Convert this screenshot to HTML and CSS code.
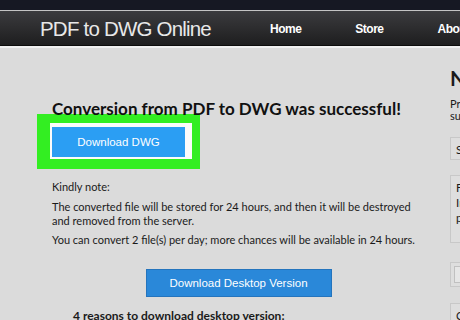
FILE: index.html
```html
<!DOCTYPE html>
<html lang="en">

<head>
    <meta charset="UTF-8">
    <meta name="viewport" content="width=device-width, initial-scale=1.0">
    <title>PDF to DWG Online - Conversion complete</title>
    <link rel="stylesheet" href="styles.css">
</head>

<body>
    <div class="top-strip"></div>

    <header class="header">
        <div class="logo">PDF to DWG Online</div>
        <nav class="nav">
            <a href="#">Home</a>
            <a href="#">Store</a>
            <a href="#">About</a>
        </nav>
    </header>

    <div class="page">
        <main class="content">
            <h1>Conversion from PDF to DWG was successful!</h1>

            <!-- highlighted download button -->
            <div class="highlight">
                <div class="btn-frame">
                    <a href="#" class="btn btn-main">Download DWG</a>
                </div>
            </div>

            <p class="note-title">Kindly note:</p>
            <p>The converted file will be stored for 24 hours, and then it will be destroyed and removed from the server.</p>
            <p>You can convert 2 file(s) per day; more chances will be available in 24 hours.</p>

            <div class="desktop">
                <a href="#" class="btn btn-desktop">Download Desktop Version</a>
            </div>

            <h2>4 reasons to download desktop version:</h2>
        </main>

        <aside class="sidebar">
            <h3>News</h3>
            <p>Professional PDF to DWG converter, supports batch conversion</p>
            <div class="side-box short">Sign up</div>
            <div class="side-box tall">Free<br>Import<br>pdf</div>
            <div class="side-box mid"><span class="field"></span></div>
            <div class="side-box">Contact</div>
        </aside>
    </div>
</body>

</html>
```

FILE: styles.css
```css
* {
    margin: 0;
    padding: 0;
    box-sizing: border-box;
}

body {
    background-color: #dbdbdb;
    font-family: Lato, 'Open Sans', sans-serif;
    color: #1a1a1a;
    width: 460px;
    height: 320px;
    overflow: hidden;
}

.top-strip {
    height: 10px;
    background-color: #161823;
}

.header {
    height: 38px;
    display: flex;
    align-items: center;
    border-top: 1px solid #c4c4c4;
    border-bottom: 2px solid #f0f0f0;
    background: linear-gradient(#3b3b3e, #1d1d1e);
    box-shadow: inset 0 -1px 0 #0c0c0c;
    padding-left: 40px;
    white-space: nowrap;
    overflow: hidden;
}

.logo {
    flex-shrink: 0;
    width: 230px;
    font-family: 'Liberation Sans', Arial, sans-serif;
    font-size: 20.5px;
    letter-spacing: -0.8px;
    color: #e8e8e8;
}

.nav {
    display: flex;
    gap: 54px;
}

.nav a {
    color: #fff;
    text-decoration: none;
    font-family: 'Liberation Sans', Arial, sans-serif;
    font-size: 12px;
    font-weight: bold;
    letter-spacing: -0.5px;
}

.page {
    display: flex;
    padding-left: 52px;
}

.content {
    width: 373px;
    flex-shrink: 0;
    padding-top: 50px;
}

h1 {
    font-size: 17px;
    font-weight: bold;
    line-height: 21px;
    color: #111;
    white-space: nowrap;
    margin-bottom: -5px;
}

.highlight {
    width: 163px;
    height: 55px;
    margin-left: -15px;
    background-color: #33ee22;
    padding: 9px 8px 9px 13px;
}

.btn-frame {
    background-color: #fbfbfb;
    padding: 4px 7px 2px 2px;
    height: 36px;
}

.btn {
    display: block;
    color: #fff;
    text-decoration: none;
    font-family: 'Liberation Sans', Arial, sans-serif;
    text-align: center;
}

.btn-main {
    height: 30px;
    line-height: 30px;
    background-color: #2b9ef3;
    font-size: 11.5px;
}

p {
    font-size: 11px;
    line-height: 14px;
    margin-bottom: 5px;
}

.note-title {
    margin-top: 11px;
    margin-bottom: 6px;
}

.desktop {
    display: flex;
    justify-content: center;
    margin-top: 22px;
}

.btn-desktop {
    width: 186px;
    height: 28px;
    line-height: 26px;
    background-color: #2a88d9;
    border: 1px solid #2474bd;
    font-size: 11.5px;
}

h2 {
    font-size: 12px;
    font-weight: bold;
    line-height: 15px;
    margin-top: 11px;
    padding-left: 21px;
    white-space: nowrap;
}

.sidebar {
    flex: 1;
    margin-left: 25px;
    padding-top: 17px;
    white-space: nowrap;
    overflow: hidden;
}

.sidebar h3 {
    font-size: 21px;
    font-weight: bold;
    line-height: 25px;
    margin-bottom: 8px;
}

.sidebar p {
    font-size: 11px;
    line-height: 12px;
    white-space: normal;
    width: 200px;
    margin-bottom: 15px;
}

.side-box {
    border: 1px solid #c8c8c8;
    background-color: #dedede;
    font-size: 11.5px;
    line-height: 15px;
    padding: 4px 5px;
    width: 200px;
}

.short {
    height: 23px;
    margin-bottom: 15px;
}

.tall {
    height: 68px;
    margin-bottom: 19px;
}

.mid {
    height: 25px;
    padding: 3px;
    margin-bottom: 16px;
}

.field {
    display: block;
    height: 17px;
    border: 1px solid #c0c0c0;
    background-color: #e6e6e6;
}
```
